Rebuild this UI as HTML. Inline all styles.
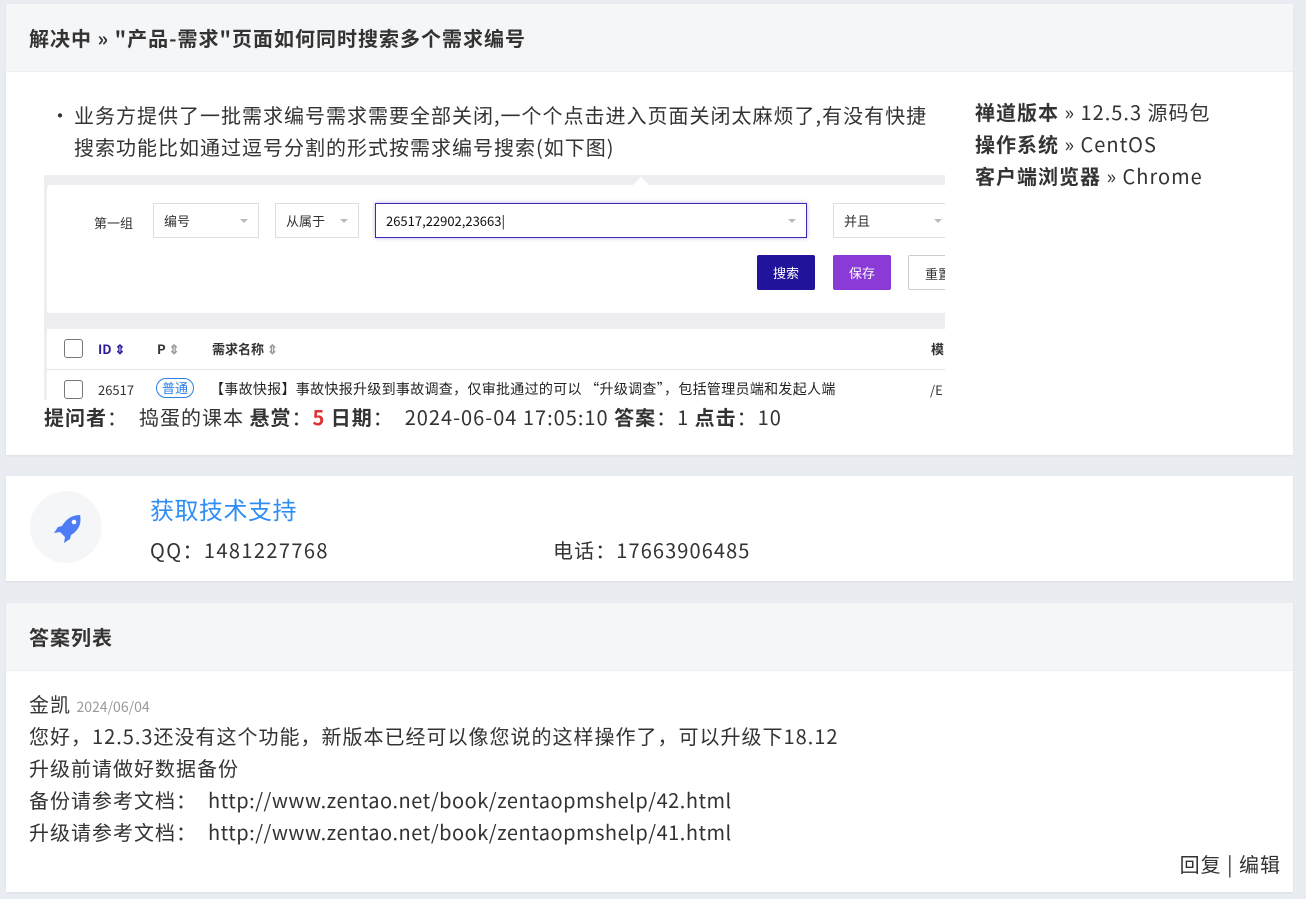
<!DOCTYPE html>
<html><head><meta charset="utf-8"><style>
*{margin:0;padding:0;box-sizing:border-box}
body{width:1306px;height:899px;background:#e9ecf1;font-family:"Noto Sans CJK SC","Liberation Sans",sans-serif;color:#333;position:relative;overflow:hidden;letter-spacing:1px}
.card{position:absolute;left:6px;width:1287px;background:#fff;box-shadow:0 1px 2px rgba(0,0,0,.06)}
.hd{background:#f5f6f8;height:68px;padding-left:23px;line-height:68px;font-size:20px;font-weight:bold;color:#333;border-bottom:1px solid #eceef1}
.abs{position:absolute;white-space:nowrap}
.img{position:absolute;left:38px;top:171px;width:901px;height:225px;background:#eeeef0;overflow:hidden;font-size:13px;color:#333;letter-spacing:0}
.sel{position:absolute;top:28px;height:35px;border:1px solid #ddd;background:#fff;padding-left:10px;line-height:33px;font-size:13px}
.sel:after{content:"";position:absolute;right:10px;top:15px;border:4px solid transparent;border-top:4px solid #bbb}
.btn{position:absolute;top:80px;height:35px;line-height:35px;color:#fff;font-size:13px;text-align:center;border-radius:2px}
.cb{position:absolute;width:19px;height:19px;border:1px solid #777;border-radius:3px;background:#fff}
.ans div{height:32px;line-height:32px}
</style></head><body>
<div class="card" style="top:4px;height:451px">
<div class="hd">解决中 » "产品-需求"页面如何同时搜索多个需求编号</div>
<div class="abs" style="left:44px;top:95px;font-size:20px;line-height:32px;color:#333">•</div>
<div class="abs" style="left:68px;top:95px;font-size:20px;line-height:32px;color:#333">业务方提供了一批需求编号需求需要全部关闭,一个个点击进入页面关闭太麻烦了,有没有快捷<br>搜索功能比如通过逗号分割的形式按需求编号搜索(如下图)</div>
<div class="img">
 <div style="position:absolute;left:3px;top:10px;width:900px;height:128px;background:#fff;border-radius:3px"></div>
 <div style="position:absolute;left:588px;top:-7px;border:9px solid transparent;border-bottom:9px solid #fff"></div>
 <div class="abs" style="left:50px;top:38px">第一组</div>
 <div class="sel" style="left:109px;width:106px">编号</div>
 <div class="sel" style="left:231px;width:84px">从属于</div>
 <div class="sel" style="left:331px;width:432px;border:1px solid #3b2bb0;box-shadow:0 0 4px rgba(80,60,200,.4);color:#111">26517,22902,23663|</div>
 <div class="sel" style="left:789px;width:120px">并且</div>
 <div class="btn" style="left:713px;width:58px;background:#22149a">搜索</div>
 <div class="btn" style="left:789px;width:58px;background:#8a3ad6">保存</div>
 <div class="btn" style="left:864px;width:60px;background:#fff;border:1px solid #ccc;color:#333">重置</div>
 <div style="position:absolute;left:3px;top:154px;width:900px;height:80px;background:#fff"></div>
 <div style="position:absolute;left:3px;top:194px;width:900px;height:1px;background:#e4e4e4"></div>
 <div class="cb" style="left:20px;top:164px"></div>
 <div class="abs" style="left:54px;top:164px;font-weight:bold;color:#2a1ca0">ID ⇕</div>
 <div class="abs" style="left:113px;top:164px;font-weight:bold">P <span style="color:#999">⇕</span></div>
 <div class="abs" style="left:168px;top:164px;font-weight:bold">需求名称 <span style="color:#999">⇕</span></div>
 <div class="abs" style="left:887px;top:164px;font-weight:bold">模</div>
 <div class="cb" style="left:20px;top:205px"></div>
 <div class="abs" style="left:54px;top:205px">26517</div>
 <div class="abs" style="left:112px;top:203px;border:1.5px solid #2a7de1;border-radius:10px;padding:0 5px;color:#2a7de1;line-height:18px">普通</div>
 <div class="abs" style="left:166px;top:204px;color:#222;font-size:14px;letter-spacing:0.3px">【事故快报】事故快报升级到事故调查，仅审批通过的可以 “升级调查”，包括管理员端和发起人端</div>
 <div class="abs" style="left:886px;top:205px">/E</div>
</div>
<div class="abs" style="left:38px;top:398px;font-size:20px;line-height:30px"><b>提问者</b>：&nbsp; 捣蛋的课本 <b>悬赏</b>：<b style="color:#d33">5</b> <b>日期</b>： &nbsp;2024-06-04 17:05:10 <b>答案</b>：1 <b>点击</b>：10</div>
<div class="abs" style="left:969px;top:92px;font-size:20px;line-height:32px"><b>禅道版本</b> » 12.5.3 源码包<br><b>操作系统</b> » CentOS<br><b>客户端浏览器</b> » Chrome</div>
</div>
<div class="card" style="top:476px;height:105px">
<div style="position:absolute;left:24px;top:15px;width:72px;height:72px;border-radius:50%;background:#f5f6f8"></div>
<svg style="position:absolute;left:44px;top:35px" width="36" height="36" viewBox="0 0 36 36"><path d="M30 4 C22 4 16 8 12 15 L8 16 L4 22 L10 21 L15 26 L14 32 L20 28 L21 24 C28 20 32 13 30 4 Z" fill="#4d7cf6"/><circle cx="24" cy="11" r="2.3" fill="#fff"/></svg>
<div class="abs" style="left:144px;top:15px;font-size:24px;color:#2f8ef4;letter-spacing:0.5px">获取技术支持</div>
<div class="abs" style="left:144px;top:59px;font-size:20px;color:#333;letter-spacing:1.4px">QQ：1481227768</div>
<div class="abs" style="left:547px;top:59px;font-size:20px;color:#333;letter-spacing:1.1px">电话：17663906485</div>
</div>
<div class="card" style="top:603px;height:289px">
<div class="hd">答案列表</div>
<div class="abs ans" style="left:23px;top:85px;font-size:20px;color:#333">
<div>金凯 <span style="font-size:14px;color:#999;letter-spacing:0">2024/06/04</span></div>
<div>您好，12.5.3还没有这个功能，新版本已经可以像您说的这样操作了，可以升级下18.12</div>
<div>升级前请做好数据备份</div>
<div>备份请参考文档： &nbsp;<span style="letter-spacing:0.5px">http://www.zentao.net/book/zentaopmshelp/42.html</span></div>
<div>升级请参考文档： &nbsp;<span style="letter-spacing:0.5px">http://www.zentao.net/book/zentaopmshelp/41.html</span></div>
</div>
<div class="abs" style="right:12px;top:246px;font-size:20px">回复 | 编辑</div>
</div>
</body></html>
